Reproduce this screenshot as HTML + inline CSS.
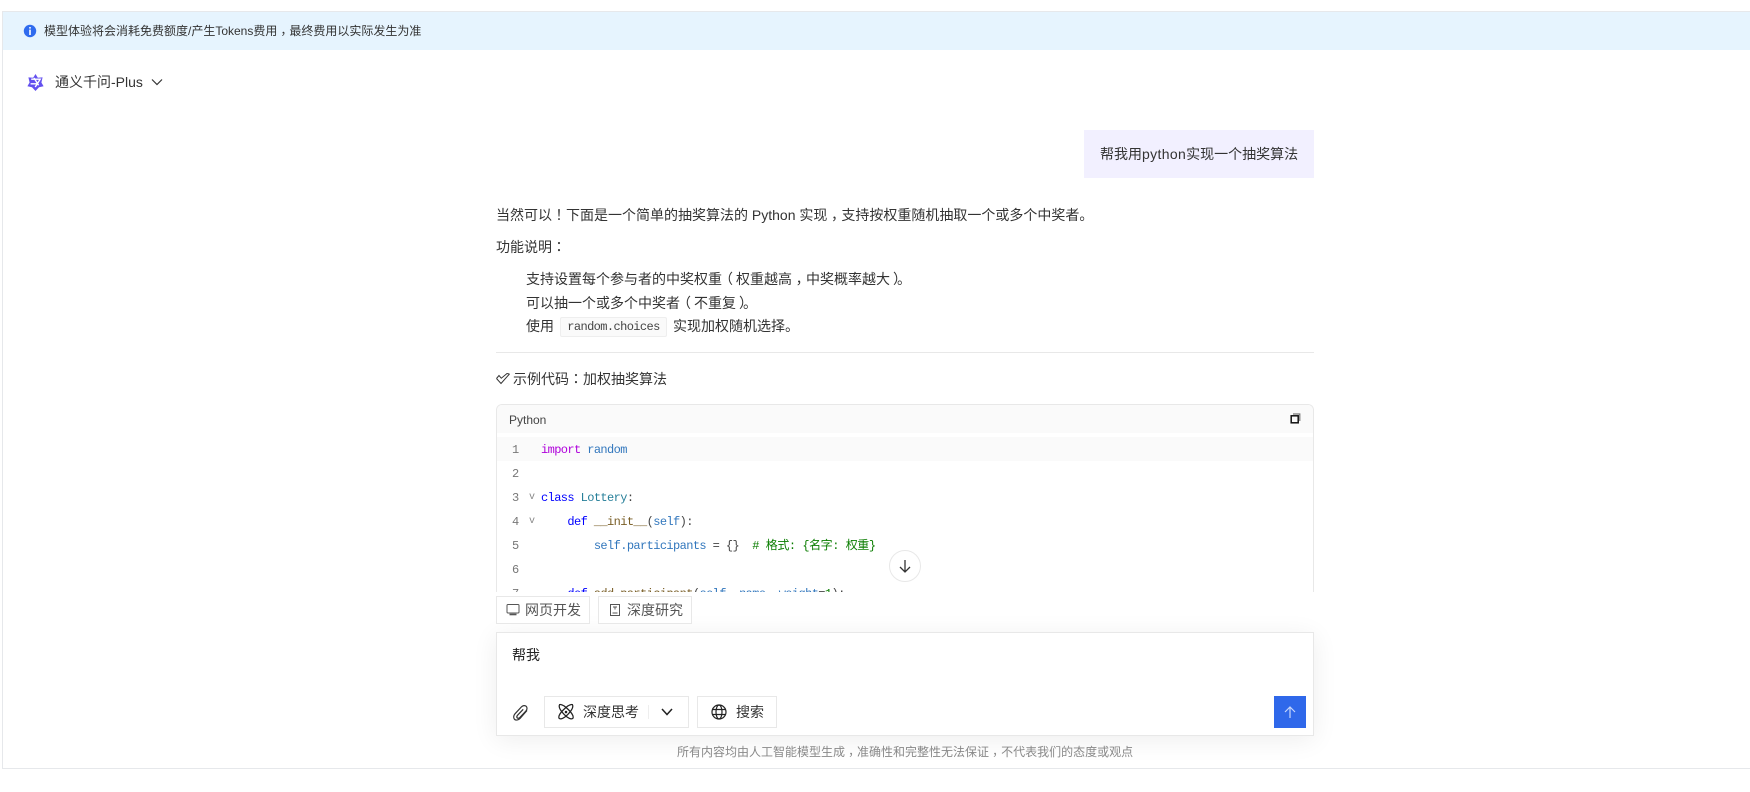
<!DOCTYPE html>
<html lang="zh-CN">
<head>
<meta charset="utf-8">
<title>通义千问</title>
<style>
*{box-sizing:border-box}
html,body{margin:0;padding:0;width:1750px;height:792px;overflow:hidden;background:#fff}
body{position:relative;font-family:"Liberation Sans","Noto Sans CJK SC",sans-serif;color:#333;font-size:14px}
.a{position:absolute;white-space:nowrap}
.t{line-height:20px;height:20px}
i{font-style:normal;font-family:"Noto Sans CJK TC",sans-serif}
i.m{position:relative;top:4px}
i.s{position:relative;top:3px}
b{font-weight:normal;position:relative}
b.l{left:-3px}
b.r{left:3px}
.code{position:absolute;left:0;right:0;height:24px;line-height:26px;font-family:"Liberation Mono","Noto Sans CJK SC",monospace;font-size:12px;letter-spacing:-.6px;white-space:pre;color:#444}
.n{position:absolute;left:15px;width:8px;color:#777;font-size:12px}
.c{position:absolute;left:44px}
.f{position:absolute;left:32px;color:#888;font-size:10px}
.k{color:#0000ff}.i{color:#af00db}.b{color:#3277bd}.y{color:#267f99}.u{color:#795e26}.g{color:#0a7d00}
.btn{position:absolute;background:#fff;border:1px solid #e8e8e8}
</style>
</head>
<body>
<!-- outer frame -->
<div class="a" style="left:2px;top:11px;width:1748px;height:758px;border:1px solid #e6e8eb;border-right:0"></div>
<!-- banner -->
<div class="a" style="left:3px;top:12px;width:1747px;height:38px;background:#e6f4fe"></div>
<svg class="a" style="left:23px;top:24px" width="14" height="14" viewBox="0 0 14 14"><circle cx="7" cy="7" r="6.2" fill="#2f6bee"/><rect x="6.2" y="3" width="1.6" height="1.6" fill="#fff"/><rect x="6.2" y="5.6" width="1.6" height="5.4" fill="#fff"/></svg>
<div class="a t" style="left:44px;top:21px;font-size:12px;color:#333">模型体验将会消耗免费额度/产生Tokens费用<i class="s" lang="zh-TW">，</i>最终费用以实际发生为准</div>

<!-- model selector -->
<svg class="a" style="left:26px;top:73px" width="19" height="19" viewBox="0 0 19 19" fill="none"><path d="M9.5 1L11.8 4.8 16.6 4.4 15.4 9.5 17.6 13.2 13 14.2 9.5 18 6 14.2 1.4 13.2 3.6 9.5 2.4 4.4 7.2 4.8Z" fill="#6350ef"/><path d="M5.2 6.2H14.2L9.2 14M8 5L12.6 12.2M4.6 10.8L11.6 10.8" stroke="#fff" stroke-width="1.4"/></svg>
<div class="a t" style="left:55px;top:72px;font-size:14px;color:#333">通义千问-Plus</div>
<svg class="a" style="left:150px;top:77px" width="14" height="10" viewBox="0 0 14 10" fill="none"><path d="M2 2.5L7 7.5 12 2.5" stroke="#333" stroke-width="1.2"/></svg>

<!-- user bubble -->
<div class="a" style="left:1084px;top:130px;width:230px;height:48px;background:#f2f0ff"></div>
<div class="a t" style="left:1100px;top:144px">帮我用<span style="letter-spacing:.35px">python</span>实现一个抽奖算法</div>

<!-- answer -->
<div class="a t" style="left:496px;top:205px">当然可以<i lang="zh-TW">！</i>下面是一个简单的抽奖算法的 Python 实现<i class="m" lang="zh-TW">，</i>支持按权重随机抽取一个或多个中奖者。</div>
<div class="a t" style="left:496px;top:237px">功能说明<i lang="zh-TW">：</i></div>
<div class="a t" style="left:526px;top:269px">支持设置每个参与者的中奖权重<b class="l">（</b>权重越高<i class="m" lang="zh-TW">，</i>中奖概率越大<b class="r">）</b>。</div>
<div class="a t" style="left:526px;top:293px">可以抽一个或多个中奖者<b class="l">（</b>不重复<b class="r">）</b>。</div>
<div class="a t" style="left:526px;top:316px">使用</div>
<div class="a" style="left:560px;top:317px;width:107px;height:20px;background:#fafafa;border:1px solid #eee;border-radius:2px;font-family:'Liberation Mono',monospace;font-size:12px;letter-spacing:-.6px;line-height:18px;text-align:center;color:#444">random.choices</div>
<div class="a t" style="left:673px;top:316px">实现加权随机选择。</div>
<div class="a" style="left:496px;top:352px;width:818px;height:1px;background:#e8e8e8"></div>

<svg class="a" style="left:495px;top:372px" width="16" height="14" viewBox="0 0 16 14" fill="none"><path d="M1.5 6.5L6 11.5 14.5 2M1.5 6.5L4 3.5 6.3 6.2 12 1.5 14.5 2" stroke="#333" stroke-width="1"/></svg>
<div class="a t" style="left:513px;top:369px">示例代码<i lang="zh-TW">：</i>加权抽奖算法</div>

<!-- code block -->
<div class="a" style="left:496px;top:404px;width:818px;height:188px;border:1px solid #e8e8e8;border-bottom:0;border-radius:6px 6px 0 0;overflow:hidden;background:#fff">
  <div class="a" style="left:0;top:0;right:0;height:28px;background:#fafafa"></div>
  <div class="a" style="left:12px;top:5px;font-size:12px;line-height:20px;color:#444">Python</div>
  <svg class="a" style="left:793px;top:8px" width="11" height="11" viewBox="0 0 11 11" fill="none"><rect x="1.2" y="2.8" width="7" height="7" stroke="#111" stroke-width="1.5"/><path d="M3 1H9.8V8" stroke="#777" stroke-width="1.2"/></svg>
  <div class="a" style="left:0;top:32px;right:0;height:24px;background:#fafafa"></div>
  <div class="code" style="top:32px"><span class="n">1</span><span class="c"><span class="i">import</span> <span class="b">random</span></span></div>
  <div class="code" style="top:56px"><span class="n">2</span></div>
  <div class="code" style="top:80px"><span class="n">3</span><span class="f">v</span><span class="c"><span class="k">class</span> <span class="y">Lottery</span>:</span></div>
  <div class="code" style="top:104px"><span class="n">4</span><span class="f">v</span><span class="c">    <span class="k">def</span> <span class="u">__init__</span>(<span class="b">self</span>):</span></div>
  <div class="code" style="top:128px"><span class="n">5</span><span class="c">        <span class="b">self.participants</span> = {}  <span class="g" style="letter-spacing:-.45px"># 格式: {名字: 权重}</span></span></div>
  <div class="code" style="top:152px"><span class="n">6</span></div>
  <div class="code" style="top:176px"><span class="n">7</span><span class="c">    <span class="k">def</span> <span class="u">add_participant</span>(<span class="b">self</span>, <span class="b">name</span>, <span class="b">weight</span>=<span class="g">1</span>):</span></div>
</div>

<!-- scroll down -->
<div class="a" style="left:889px;top:550px;width:32px;height:32px;border-radius:50%;background:#fff;border:1px solid #e8e8e8"></div>
<svg class="a" style="left:897px;top:558px" width="16" height="16" viewBox="0 0 16 16" fill="none"><path d="M8 2V14M3 9L8 14 13 9" stroke="#333" stroke-width="1.3"/></svg>

<!-- shadow under input -->
<div class="a" style="left:496px;top:632px;width:818px;height:104px;box-shadow:0 4px 24px rgba(0,0,0,.07)"></div>
<div class="a" style="left:3px;top:769px;width:1747px;height:23px;background:#fff"></div>

<!-- quick buttons -->
<div class="btn" style="left:496px;top:596px;width:94px;height:28px"></div>
<svg class="a" style="left:506px;top:603px" width="14" height="14" viewBox="0 0 14 14" fill="none"><rect x="1" y="1.5" width="12" height="8.5" rx="1" stroke="#555" stroke-width="1"/><path d="M3.5 11.5H10.5" stroke="#555" stroke-width="1.6"/></svg>
<div class="a t" style="left:525px;top:600px;color:#555">网页开发</div>
<div class="btn" style="left:598px;top:596px;width:94px;height:28px"></div>
<svg class="a" style="left:608px;top:603px" width="14" height="14" viewBox="0 0 14 14" fill="none"><rect x="2.5" y="1.5" width="9" height="11" stroke="#555" stroke-width="1"/><path d="M5 4H9M7 4V6.5M4.5 10H9.5" stroke="#555" stroke-width="1"/></svg>
<div class="a t" style="left:627px;top:600px;color:#555">深度研究</div>

<!-- input -->
<div class="a" style="left:496px;top:632px;width:818px;height:104px;background:#fff;border:1px solid #e8e8e8"></div>
<div class="a t" style="left:512px;top:645px;color:#222">帮我</div>
<svg class="a" style="left:512px;top:704px" width="18" height="18" viewBox="0 0 18 18" fill="none"><path d="M15 6.5L8 14.5C6.3 16.4 3.5 16.5 2.4 15.2 1.2 13.8 1.6 11.5 3 9.8L9.3 3C10.8 1.4 13 1.2 14.2 2.3 15.4 3.5 15.2 5.5 14 6.9L7.8 13.5C7 14.4 5.8 14.5 5.2 13.9 4.6 13.3 4.8 12.2 5.5 11.3L11.2 5.3" stroke="#333" stroke-width="1.2"/></svg>

<div class="btn" style="left:544px;top:696px;width:145px;height:32px"></div>
<svg class="a" style="left:557px;top:703px" width="18" height="18" viewBox="0 0 17 17" fill="none" stroke="#222" stroke-width="1.2"><path d="M2.5 1.5C5 1 8 3.5 11 6.5S16 12.5 15 14.5C13.5 16 10 14 7 11S1 4 2.5 1.5Z"/><path d="M14.5 1.5C12 1 9 3.5 6 6.5S1 12.5 2 14.5C3.5 16 7 14 10 11S16 4 14.5 1.5Z"/><circle cx="8.5" cy="8.5" r="1.2" fill="#222" stroke="none"/></svg>
<div class="a t" style="left:583px;top:702px;color:#333">深度思考</div>
<div class="a" style="left:648px;top:705px;width:1px;height:14px;background:#eee"></div>
<svg class="a" style="left:660px;top:707px" width="14" height="10" viewBox="0 0 14 10" fill="none"><path d="M2 2L7 7.5 12 2" stroke="#222" stroke-width="1.5"/></svg>

<div class="btn" style="left:697px;top:696px;width:80px;height:32px"></div>
<svg class="a" style="left:711px;top:704px" width="16" height="16" viewBox="0 0 16 16" fill="none" stroke="#222" stroke-width="1.2"><circle cx="8" cy="8" r="7"/><ellipse cx="8" cy="8" rx="3" ry="7"/><path d="M1 5.5H15M1 10.5H15"/></svg>
<div class="a t" style="left:736px;top:702px;color:#333">搜索</div>

<div class="a" style="left:1274px;top:696px;width:32px;height:32px;background:#2f68ea"></div>
<svg class="a" style="left:1283px;top:705px" width="14" height="14" viewBox="0 0 14 14" fill="none"><path d="M7 13V2M2 7L7 2 12 7" stroke="#c6d6fb" stroke-width="1.2"/></svg>

<!-- footer -->
<div class="a" style="left:677px;top:742px;font-size:12px;line-height:20px;color:#888">所有内容均由人工智能模型生成<i class="s" lang="zh-TW">，</i>准确性和完整性无法保证<i class="s" lang="zh-TW">，</i>不代表我们的态度或观点</div>
</body>
</html>
